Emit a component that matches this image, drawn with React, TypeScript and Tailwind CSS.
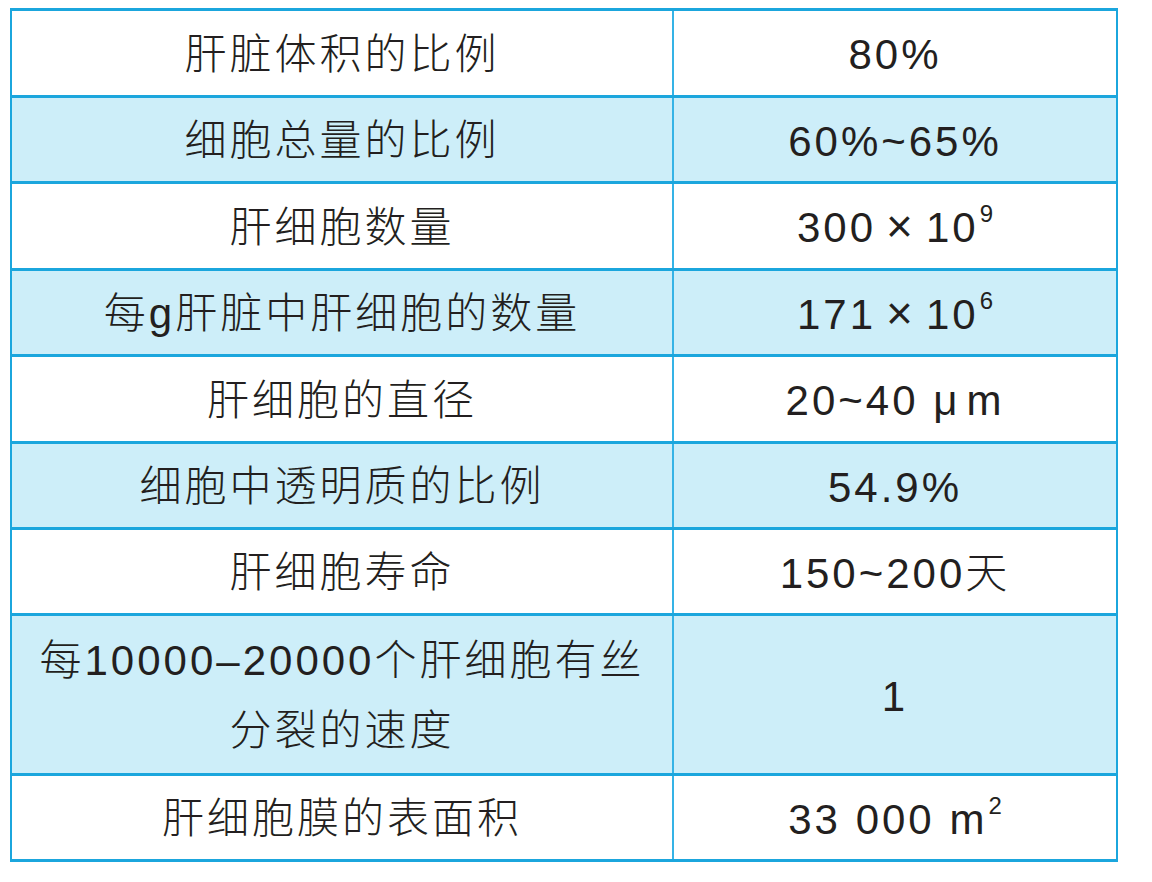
import React from "react";

type Row = {
  label: React.ReactNode;
  value: React.ReactNode;
  h: string;
  shaded: boolean;
};

const Sup = ({ children }: { children: React.ReactNode }) => (
  <sup className="relative -top-[20px] ml-[1px] text-[24px] tracking-normal">{children}</sup>
);

// the multiplication sign sits in its own fixed box so the gaps match
const Times = () => (
  <span className="ml-[10px] mr-[18px] inline-block w-[22px] text-center text-[46px] leading-none tracking-normal">×</span>
);

const rows: Row[] = [
  { label: "肝脏体积的比例", value: "80%", h: "h-[87px]", shaded: false },
  { label: "细胞总量的比例", value: "60%~65%", h: "h-[86px]", shaded: true },
  {
    label: "肝细胞数量",
    value: (
      <>
        300<Times />10<Sup>9</Sup>
      </>
    ),
    h: "h-[87px]",
    shaded: false,
  },
  {
    label: "每g肝脏中肝细胞的数量",
    value: (
      <>
        171<Times />10<Sup>6</Sup>
      </>
    ),
    h: "h-[86px]",
    shaded: true,
  },
  {
    label: "肝细胞的直径",
    value: (
      <>
        20~40 <span className="mr-[6px]">μ</span>m
      </>
    ),
    h: "h-[87px]",
    shaded: false,
  },
  { label: "细胞中透明质的比例", value: "54.9%", h: "h-[86px]", shaded: true },
  { label: "肝细胞寿命", value: "150~200天", h: "h-[86px]", shaded: false },
  {
    label: (
      <>
        每10000–20000个肝细胞有丝
        <br />
        分裂的速度
      </>
    ),
    value: "1",
    h: "h-[160px]",
    shaded: true,
  },
  {
    label: "肝细胞膜的表面积",
    value: (
      <>
        33 000 m<Sup>2</Sup>
      </>
    ),
    h: "h-[86px]",
    shaded: false,
  },
];

export default function App() {
  return (
    <div className="min-h-[882px] w-[1152px] bg-white pt-[8px] pl-[10px] font-['Liberation_Sans','Noto_Sans_CJK_SC',sans-serif] text-[42px] font-light tracking-[3px] text-[#231f20]">
      <div className="flex w-[1108px] flex-col border-x-[2px] border-t-[3px] border-[#1ba6dd]">
        {rows.map((r, i) => (
          <div
            key={i}
            className={`flex ${r.h} border-b-[3px] border-[#1ba6dd] ${r.shaded ? "bg-[#cdeef9]" : "bg-white"}`}
          >
            <div className="flex w-[662px] items-center justify-center border-r-[2px] border-[#35b3e6] pt-[3px] text-center leading-[70px]">
              <span>{r.label}</span>
            </div>
            <div className="flex flex-1 items-center justify-center pt-[3px] text-center">
              <span>{r.value}</span>
            </div>
          </div>
        ))}
      </div>
    </div>
  );
}
